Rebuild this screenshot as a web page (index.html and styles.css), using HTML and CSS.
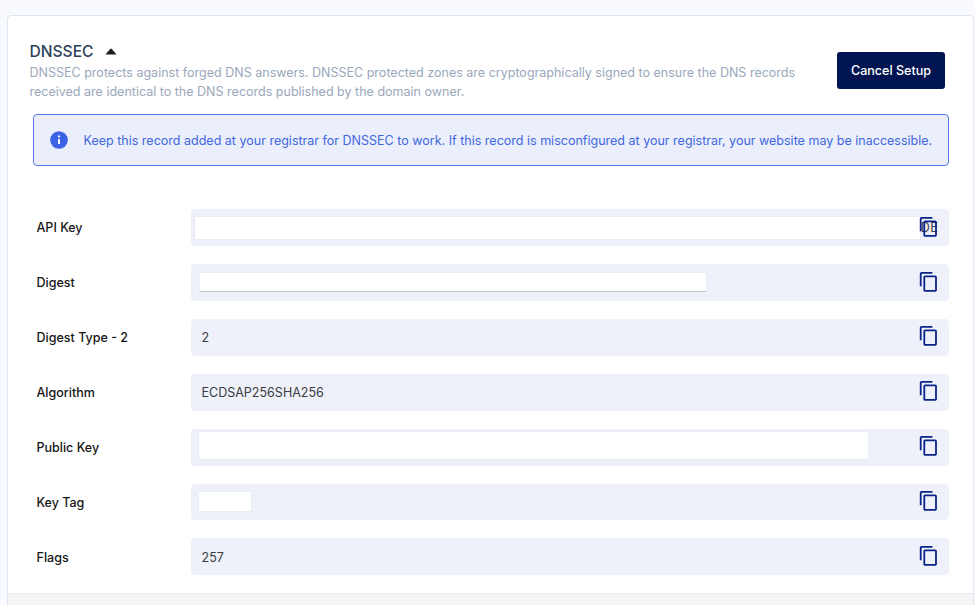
FILE: index.html
```html
<!DOCTYPE html>
<html lang="en">
<head>
<meta charset="utf-8">
<title>DNSSEC</title>
<link rel="stylesheet" href="styles.css">
</head>
<body>
<svg class="sprite" aria-hidden="true">
  <symbol id="copy" viewBox="0 0 24 24"><path d="M16 1H4c-1.100 0-2 .9-2 2v14h2V3h12V1zm3 4H8c-1.100 0-2 .9-2 2v14c0 1.100.9 2 2 2h11c1.100 0 2-.9 2-2V7c0-1.100-.9-2-2-2zm0 16H8V7h11v14z"/></symbol>
</svg>
<main class="card">
  <header class="header">
    <div class="intro">
      <h1 class="title">DNSSEC <svg class="caret" viewBox="0 0 12 7"><path d="M0.500 6.500L5.200 1q.8-.8 1.600 0L11.500 6.500z"/></svg></h1>
      <p class="description">DNSSEC protects against forged DNS answers. DNSSEC protected zones are cryptographically signed to ensure the DNS records<br>received are identical to the DNS records published by the domain owner.</p>
    </div>
    <button class="cancel">Cancel Setup</button>
  </header>
  <div class="notice">
    <svg class="info" viewBox="0 0 18 18"><circle cx="9" cy="9" r="8.800"/><path d="M9 8v5M9 4.600v1.900"/></svg>
    <p class="message">Keep this record added at your registrar for DNSSEC to work. If this record is misconfigured at your registrar, your website may be inaccessible.</p>
  </div>
  <section class="records">
    <div class="row"><span class="label">API Key</span><div class="field"><span class="mask mask-api"></span><span class="tail">0DE</span><svg class="copy"><use href="#copy"/></svg></div></div>
    <div class="row"><span class="label">Digest</span><div class="field"><span class="mask mask-digest"></span><svg class="copy"><use href="#copy"/></svg></div></div>
    <div class="row"><span class="label">Digest Type - 2</span><div class="field"><span class="value">2</span><svg class="copy"><use href="#copy"/></svg></div></div>
    <div class="row"><span class="label">Algorithm</span><div class="field"><span class="value">ECDSAP256SHA256</span><svg class="copy"><use href="#copy"/></svg></div></div>
    <div class="row"><span class="label">Public Key</span><div class="field"><span class="mask mask-public"></span><svg class="copy"><use href="#copy"/></svg></div></div>
    <div class="row"><span class="label">Key Tag</span><div class="field"><span class="mask mask-tag"></span><svg class="copy"><use href="#copy"/></svg></div></div>
    <div class="row"><span class="label">Flags</span><div class="field"><span class="value">257</span><svg class="copy"><use href="#copy"/></svg></div></div>
  </section>
  <footer class="footer"></footer>
</main>
</body>
</html>
```
FILE: styles.css
```css
* { box-sizing: border-box; }
body {
  margin: 0;
  height: 605px;
  padding: 15px 1px 0 7px;
  overflow: hidden;
  background: #f9faff;
  font-family: Inter, sans-serif;
  font-size: 12.520px;
}
.sprite { position: absolute; width: 0; height: 0; }
.card {
  display: flex;
  flex-direction: column;
  height: 600px;
  background: #fff;
  border: 1.500px solid #dfe6f0;
  border-radius: 4px;
}
.header {
  display: flex;
  justify-content: space-between;
  align-items: flex-start;
  height: 98px;
  padding: 25px 28px 0 21.500px;
}
.title {
  display: flex;
  align-items: center;
  gap: 11.500px;
  margin: 0;
  font-size: 15.600px;
  font-weight: 450;
  line-height: 21px;
  color: #2c405a;
}
.caret { width: 12px; height: 7px; fill: #1c1c1c; }
.description {
  margin: 1px 0 0;
  font-size: 12.530px;
  line-height: 19px;
  white-space: nowrap;
  color: #9aa8ba;
}
.cancel {
  width: 108px;
  height: 37px;
  margin-top: 11px;
  padding: 0;
  border: 0;
  border-radius: 3px;
  background: #001551;
  color: #fff;
  font: 500 12.550px Inter, sans-serif;
}
.notice {
  display: flex;
  align-items: center;
  gap: 16px;
  width: 916px;
  height: 52px;
  margin-left: 24.500px;
  padding-left: 16px;
  border: 1.500px solid #5578e6;
  border-radius: 4px;
  background: #ebeffc;
}
.info { flex: none; width: 18px; height: 18px; fill: #3b62e5; stroke: none; }
.info path { stroke: #fff; stroke-width: 1.900; }
.message { margin: 0; white-space: nowrap; color: #4267dc; }
.records {
  display: flex;
  flex-direction: column;
  gap: 18px;
  padding: 43px 25px 0 28.500px;
}
.row {
  display: grid;
  grid-template-columns: 154.500px 757.500px;
  align-items: center;
  height: 36.920px;
}
.label { padding-top: 0.800px; font-weight: 500; color: #161616; }
.field {
  position: relative;
  display: flex;
  align-items: center;
  height: 36.900px;
  padding: 0 9px 0 10.500px;
  border-radius: 4px;
  background: #eef1fa;
}
.value { padding-top: 0.800px; color: #3c3c40; }
.copy { position: relative; z-index: 2; flex: none; width: 21.600px; height: 21.600px; margin-left: auto; margin-top: -2px; fill: #0a2387; }
.mask { background: #fff; border: 1px solid #e9edf6; flex: none; }
.mask-api { position: relative; z-index: 1; width: 727px; height: 24px; margin-left: -8px; margin-right: -12px; margin-top: 1px; }
.mask-digest { width: 508px; height: 20px; margin-left: -3px; border-bottom-color: #c5c8d1; }
.mask-public { width: 671px; height: 29px; margin-left: -4px; margin-top: -4px; }
.mask-tag { width: 54px; height: 21px; margin-left: -4px; }
.tail { position: absolute; right: 10.500px; letter-spacing: 0.300px; color: #3c3c40; }
.footer { flex: 1; margin-top: 18px; border-top: 1px solid #ebebeb; background: #f5f5f5; }
```
